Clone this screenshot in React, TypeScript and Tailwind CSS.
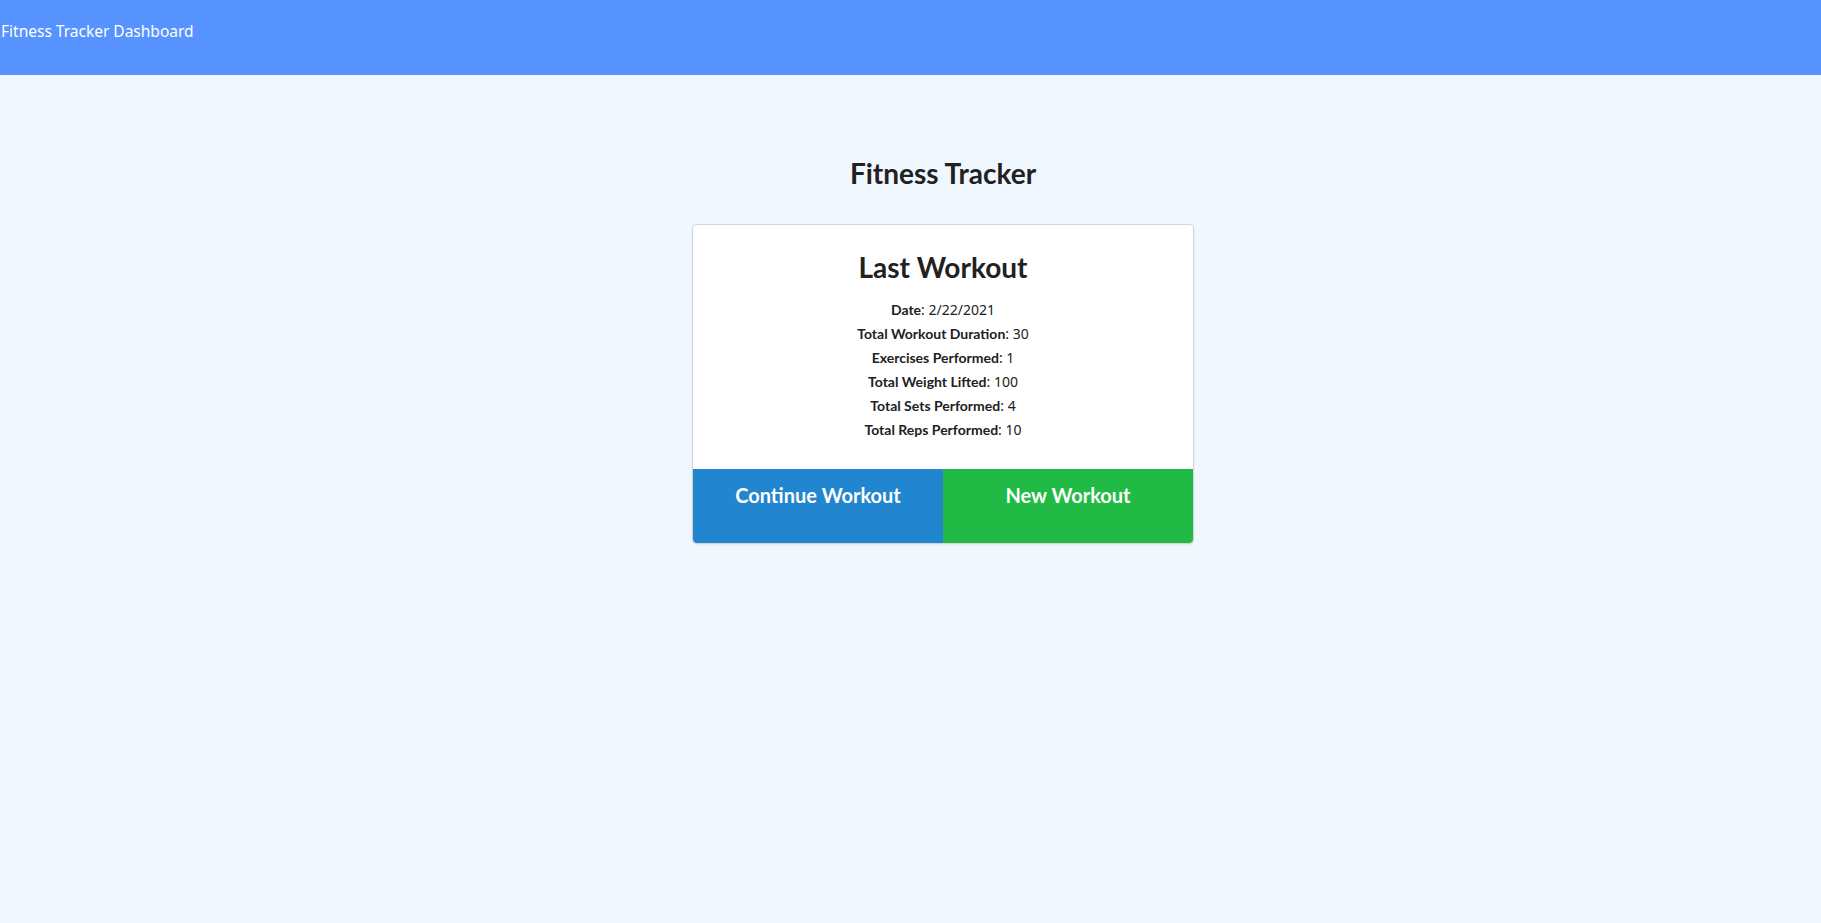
import React from "react";

const rows: [string, string][] = [
  ["Date", "2/22/2021"],
  ["Total Workout Duration", "30"],
  ["Exercises Performed", "1"],
  ["Total Weight Lifted", "100"],
  ["Total Sets Performed", "4"],
  ["Total Reps Performed", "10"],
];

export default function App() {
  return (
    <div className="min-h-[923px] bg-[#f1f7ff] font-['Lato',sans-serif] text-[#212121]">
      <header className="h-[75px] bg-[#5693ff] pl-[1px] pt-[19px]">
        <span className="font-['Noto_Sans',sans-serif] text-[15.5px] leading-[22px] text-white">
          Fitness Tracker Dashboard
        </span>
      </header>
      <main className="flex flex-col items-center pl-[65px] pt-[81px]">
        <h1 className="text-[28px] font-bold leading-[34px]">Fitness Tracker</h1>
        <div className="mt-[35px] w-[500px] rounded-[4px] bg-white shadow-[0_1px_3px_0_#d4d4d5,0_0_0_1px_#d4d4d5]">
          <div className="flex flex-col items-center pt-[25px] pb-[27px]">
            <h2 className="text-[28px] font-bold leading-[34px]">Last Workout</h2>
            <div className="mt-[14px] flex flex-col items-center">
              {rows.map(([k, v]) => (
                <p key={k} className="text-[14px] leading-[24px]">
                  <span className="font-bold">{k}</span>
                  <span className="font-['Noto_Sans',sans-serif]">: {v}</span>
                </p>
              ))}
            </div>
          </div>
          <div className="grid h-[74px] grid-cols-2 overflow-hidden rounded-b-[4px]">
            <button className="flex justify-center bg-[#2185d0] pt-[14px] text-[20px] font-bold leading-[24px] text-white">
              Continue Workout
            </button>
            <button className="flex justify-center bg-[#21ba45] pt-[14px] text-[20px] font-bold leading-[24px] text-white">
              New Workout
            </button>
          </div>
        </div>
      </main>
    </div>
  );
}
